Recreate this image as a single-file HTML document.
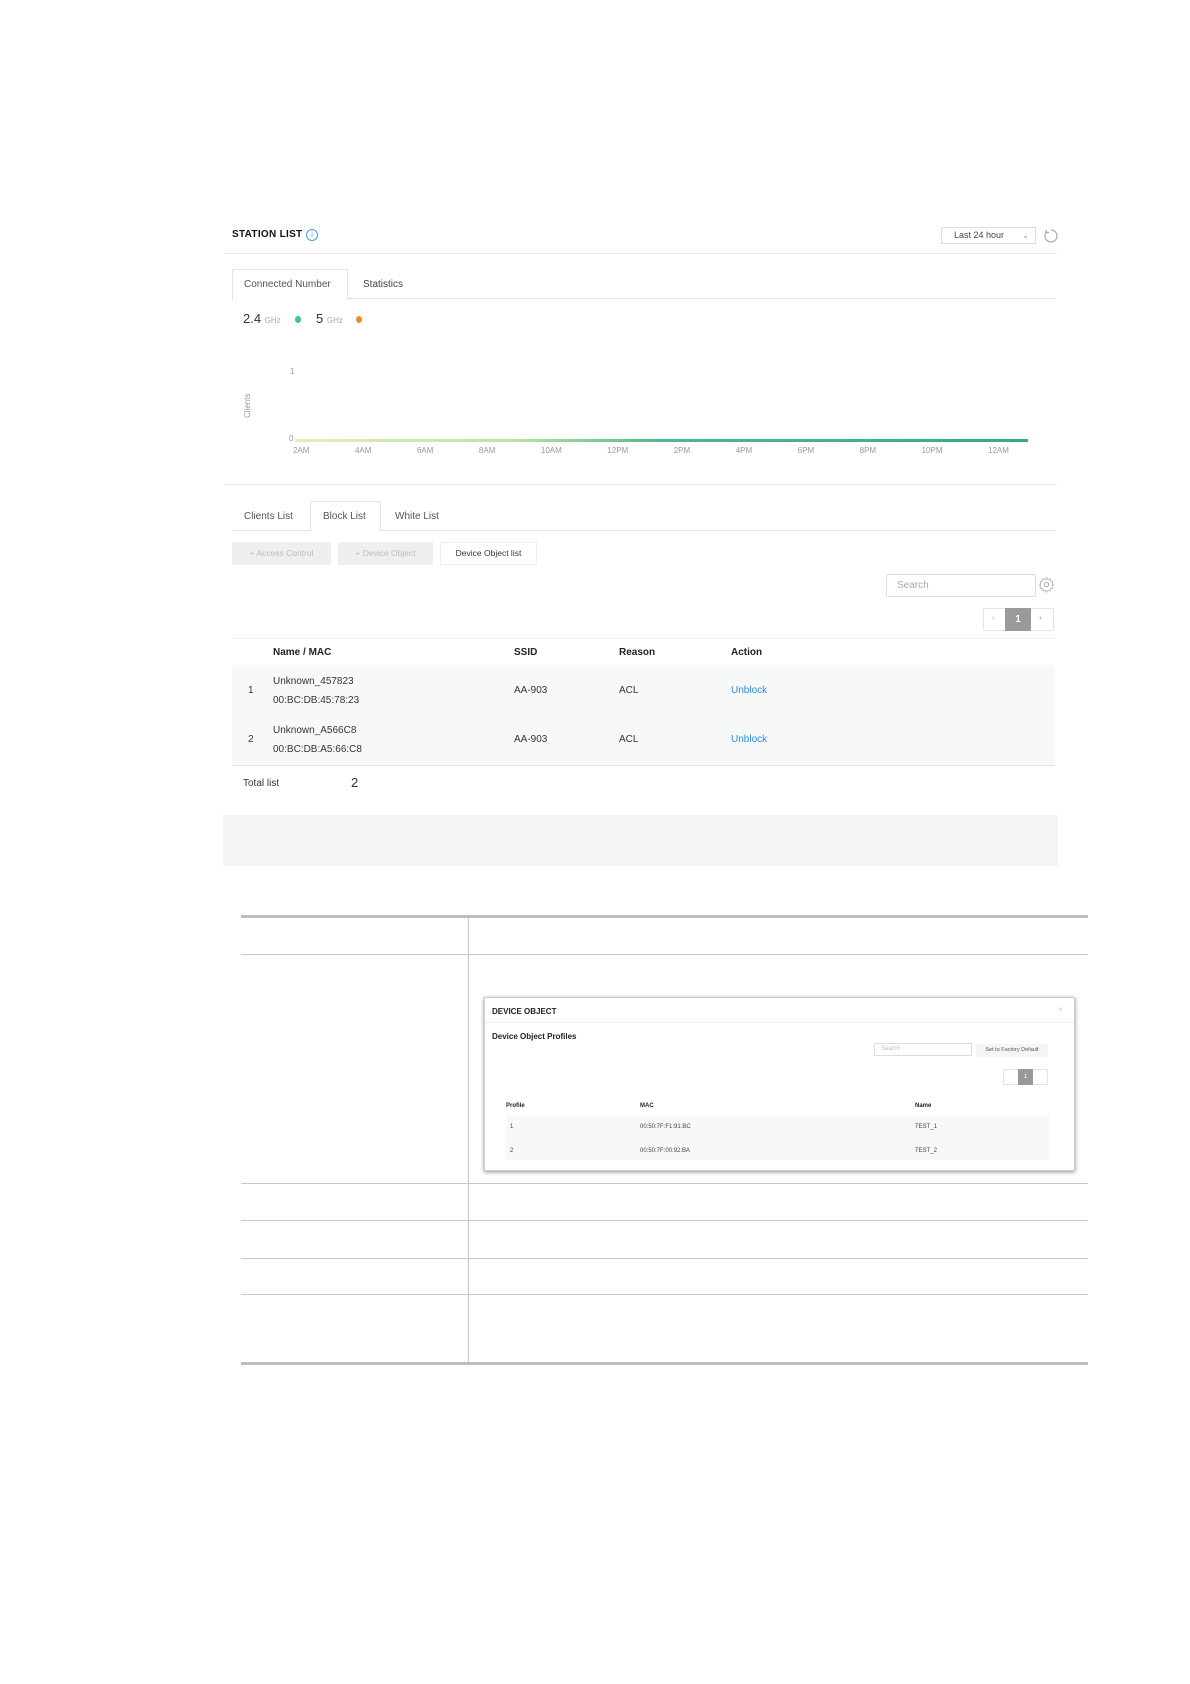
<!DOCTYPE html>
<html><head><meta charset="utf-8"><style>
*{margin:0;padding:0;box-sizing:border-box}
body{width:1190px;height:1684px;background:#fff;position:relative;font-family:"Liberation Sans",sans-serif;color:#333;overflow:hidden}
.a{position:absolute;white-space:nowrap}
.hl{position:absolute;height:1px;background:#ececec}
</style></head><body>
<div class="a" style="left:232px;top:229px;font-size:10px;font-weight:bold;color:#111;letter-spacing:.3px">STATION LIST</div>
<div class="a" style="left:306px;top:229px;width:12px;height:12px;border:1px solid #4a9be0;border-radius:50%;font-size:8px;color:#4a9be0;text-align:center;line-height:10px">i</div>
<div class="a" style="left:941px;top:227px;width:95px;height:17px;border:1px solid #ddd;font-size:9px;color:#444;padding-left:12px;line-height:15px">Last 24 hour<span style="position:absolute;right:6px;top:0;color:#999;font-size:8px">&#8964;</span></div>
<svg class="a" style="left:1043px;top:228px" width="16" height="16" viewBox="0 0 16 16"><path d="M4 3.5A6 6 0 1 0 8 2" fill="none" stroke="#aaa" stroke-width="1.2"/><path d="M3 1.5v3h3" fill="none" stroke="#aaa" stroke-width="1.2"/></svg>
<div class="hl" style="left:224px;top:253px;width:833px"></div>
<div class="a" style="left:232px;top:269px;width:116px;height:31px;border:1px solid #e4e4e4;border-bottom:none;background:#fff"></div>
<div class="a" style="left:244px;top:279px;font-size:10px;color:#555">Connected Number</div>
<div class="a" style="left:363px;top:279px;font-size:10px;color:#444">Statistics</div>
<div class="hl" style="left:348px;top:298px;width:707px;background:#e2e2e2"></div>
<div class="a" style="left:243px;top:311px;font-size:13px;color:#333">2.4 <span style="font-size:8px;color:#aaa">GHz</span></div>
<div class="a" style="left:295px;top:316px;width:6px;height:7px;border-radius:50%;background:#3cc48d"></div>
<div class="a" style="left:316px;top:311px;font-size:13px;color:#333">5 <span style="font-size:8px;color:#aaa">GHz</span></div>
<div class="a" style="left:356px;top:316px;width:6px;height:7px;border-radius:50%;background:#f08a2c"></div>
<div class="a" style="left:290px;top:367px;font-size:8px;color:#999">1</div>
<div class="a" style="left:289px;top:434px;font-size:8px;color:#999">0</div>
<div class="a" style="left:243px;top:418px;font-size:8px;color:#999;transform:rotate(-90deg);transform-origin:left top">Clients</div>
<div class="a" style="left:295px;top:439px;width:733px;height:3px;background:linear-gradient(90deg,#e4efb8,#b9e3a4 30%,#4cb98c 50%,#2fae82)"></div>
<div class="a" style="left:293px;top:446px;width:716px;font-size:8px;color:#999;display:flex;justify-content:space-between"><span>2AM</span><span>4AM</span><span>6AM</span><span>8AM</span><span>10AM</span><span>12PM</span><span>2PM</span><span>4PM</span><span>6PM</span><span>8PM</span><span>10PM</span><span>12AM</span></div>
<div class="hl" style="left:224px;top:484px;width:833px"></div>
<div class="a" style="left:310px;top:501px;width:71px;height:30px;border:1px solid #e4e4e4;border-bottom:none;background:#fff"></div>
<div class="a" style="left:244px;top:511px;font-size:10px;color:#555">Clients List</div>
<div class="a" style="left:323px;top:511px;font-size:10px;color:#555">Block List</div>
<div class="a" style="left:395px;top:511px;font-size:10px;color:#555">White List</div>
<div class="hl" style="left:232px;top:530px;width:78px;background:#e2e2e2"></div>
<div class="hl" style="left:381px;top:530px;width:674px;background:#e2e2e2"></div>
<div class="a" style="left:232px;top:542px;width:99px;height:23px;background:#eef0f0;font-size:8.5px;color:#bbb;text-align:center;line-height:23px">+ Access Control</div>
<div class="a" style="left:338px;top:542px;width:95px;height:23px;background:#eef0f0;font-size:8.5px;color:#bbb;text-align:center;line-height:23px">+ Device Object</div>
<div class="a" style="left:440px;top:542px;width:97px;height:23px;background:#fff;border:1px solid #eee;font-size:8.5px;color:#333;text-align:center;line-height:21px">Device Object list</div>
<div class="a" style="left:886px;top:574px;width:150px;height:23px;border:1px solid #ddd;border-radius:2px;font-size:10px;color:#aaa;padding-left:10px;line-height:21px">Search</div>
<svg class="a" style="left:1038px;top:576px" width="17" height="17" viewBox="0 0 24 24"><circle cx="12" cy="12" r="3" fill="none" stroke="#aaa" stroke-width="1.3"/><path d="M12 2l2 3 3-1 1 3 3 1-1 3 2 1-2 2 1 3-3 1-1 3-3-1-2 3-2-3-3 1-1-3-3-1 1-3-2-1 2-2-1-3 3-1 1-3 3 1z" fill="none" stroke="#aaa" stroke-width="1.1"/></svg>
<div class="a" style="left:983px;top:608px;width:71px;height:23px;border:1px solid #e4e4e4;border-radius:2px"></div>
<div class="a" style="left:992px;top:613px;font-size:8px;color:#bbb">&#8249;</div>
<div class="a" style="left:1005px;top:608px;width:26px;height:23px;background:#9a9a9a;color:#fff;font-size:10px;font-weight:bold;text-align:center;line-height:23px">1</div>
<div class="a" style="left:1039px;top:613px;font-size:8px;color:#999">&#8250;</div>
<div class="hl" style="left:232px;top:638px;width:823px;background:#f0f0f0"></div>
<div class="a" style="left:273px;top:647px;font-size:10px;font-weight:bold;color:#222">Name / MAC</div>
<div class="a" style="left:514px;top:647px;font-size:10px;font-weight:bold;color:#222">SSID</div>
<div class="a" style="left:619px;top:647px;font-size:10px;font-weight:bold;color:#222">Reason</div>
<div class="a" style="left:731px;top:647px;font-size:10px;font-weight:bold;color:#222">Action</div>
<div class="a" style="left:232px;top:665px;width:823px;height:100px;background:#f7f8f8"></div>
<div class="a" style="left:248px;top:685px;font-size:10px;color:#333">1</div>
<div class="a" style="left:273px;top:676px;font-size:10px;color:#333">Unknown_457823</div>
<div class="a" style="left:273px;top:695px;font-size:10px;color:#333">00:BC:DB:45:78:23</div>
<div class="a" style="left:514px;top:685px;font-size:10px;color:#333">AA-903</div>
<div class="a" style="left:619px;top:685px;font-size:10px;color:#333">ACL</div>
<div class="a" style="left:731px;top:685px;font-size:10px;color:#2a8de0">Unblock</div>
<div class="a" style="left:248px;top:734px;font-size:10px;color:#333">2</div>
<div class="a" style="left:273px;top:725px;font-size:10px;color:#333">Unknown_A566C8</div>
<div class="a" style="left:273px;top:744px;font-size:10px;color:#333">00:BC:DB:A5:66:C8</div>
<div class="a" style="left:514px;top:734px;font-size:10px;color:#333">AA-903</div>
<div class="a" style="left:619px;top:734px;font-size:10px;color:#333">ACL</div>
<div class="a" style="left:731px;top:734px;font-size:10px;color:#2a8de0">Unblock</div>
<div class="hl" style="left:232px;top:765px;width:823px;background:#e4e4e4"></div>
<div class="a" style="left:243px;top:778px;font-size:10px;color:#333">Total list</div>
<div class="a" style="left:351px;top:775px;font-size:13px;color:#333">2</div>
<div class="a" style="left:223px;top:815px;width:835px;height:51px;background:#f4f4f4"></div>
<div class="a" style="left:241px;top:915px;width:847px;height:3px;background:#bdbdbd"></div>
<div class="a" style="left:468px;top:918px;width:1px;height:446px;background:#c8c8c8"></div>
<div class="hl" style="left:241px;top:954px;width:847px;background:#c8c8c8"></div>
<div class="hl" style="left:241px;top:1183px;width:847px;background:#c8c8c8"></div>
<div class="hl" style="left:241px;top:1220px;width:847px;background:#c8c8c8"></div>
<div class="hl" style="left:241px;top:1258px;width:847px;background:#c8c8c8"></div>
<div class="hl" style="left:241px;top:1294px;width:847px;background:#c8c8c8"></div>
<div class="a" style="left:241px;top:1362px;width:847px;height:3px;background:#bdbdbd"></div>
<div class="a" style="left:484px;top:997px;width:591px;height:174px;background:#fff;border:1px solid #ccc;box-shadow:0 1px 4px rgba(0,0,0,.45)"></div>
<div class="a" style="left:492px;top:1007px;font-size:8px;font-weight:bold;color:#222">DEVICE OBJECT</div>
<div class="a" style="left:1058px;top:1005px;font-size:8px;color:#ccc">×</div>
<div class="hl" style="left:485px;top:1022px;width:589px;background:#f0f0f0"></div>
<div class="a" style="left:492px;top:1032px;font-size:8px;font-weight:bold;color:#222">Device Object Profiles</div>
<div class="a" style="left:874px;top:1043px;width:98px;height:13px;border:1px solid #ddd;font-size:6px;color:#bbb;padding-left:6px;line-height:11px">Search</div>
<div class="a" style="left:976px;top:1044px;width:72px;height:13px;background:#f5f5f5;font-size:5.5px;color:#555;text-align:center;line-height:13px">Set to Factory Default</div>
<div class="a" style="left:1003px;top:1069px;width:45px;height:16px;border:1px solid #e4e4e4"></div>
<div class="a" style="left:1018px;top:1069px;width:15px;height:16px;background:#999;color:#fff;font-size:6px;text-align:center;line-height:16px">1</div>
<div class="a" style="left:506px;top:1103px;font-size:6px;font-weight:bold;color:#222">Profile</div>
<div class="a" style="left:640px;top:1103px;font-size:6px;font-weight:bold;color:#222">MAC</div>
<div class="a" style="left:915px;top:1103px;font-size:6px;font-weight:bold;color:#222">Name</div>
<div class="a" style="left:506px;top:1115px;width:543px;height:45px;background:#f6f8fa"></div>
<div class="a" style="left:510px;top:1124px;font-size:6px;color:#444">1</div>
<div class="a" style="left:640px;top:1124px;font-size:6px;color:#444">00:50:7F:F1:91:BC</div>
<div class="a" style="left:915px;top:1124px;font-size:6px;color:#444">TEST_1</div>
<div class="a" style="left:510px;top:1148px;font-size:6px;color:#444">2</div>
<div class="a" style="left:640px;top:1148px;font-size:6px;color:#444">00:50:7F:00:92:BA</div>
<div class="a" style="left:915px;top:1148px;font-size:6px;color:#444">TEST_2</div>
</body></html>
